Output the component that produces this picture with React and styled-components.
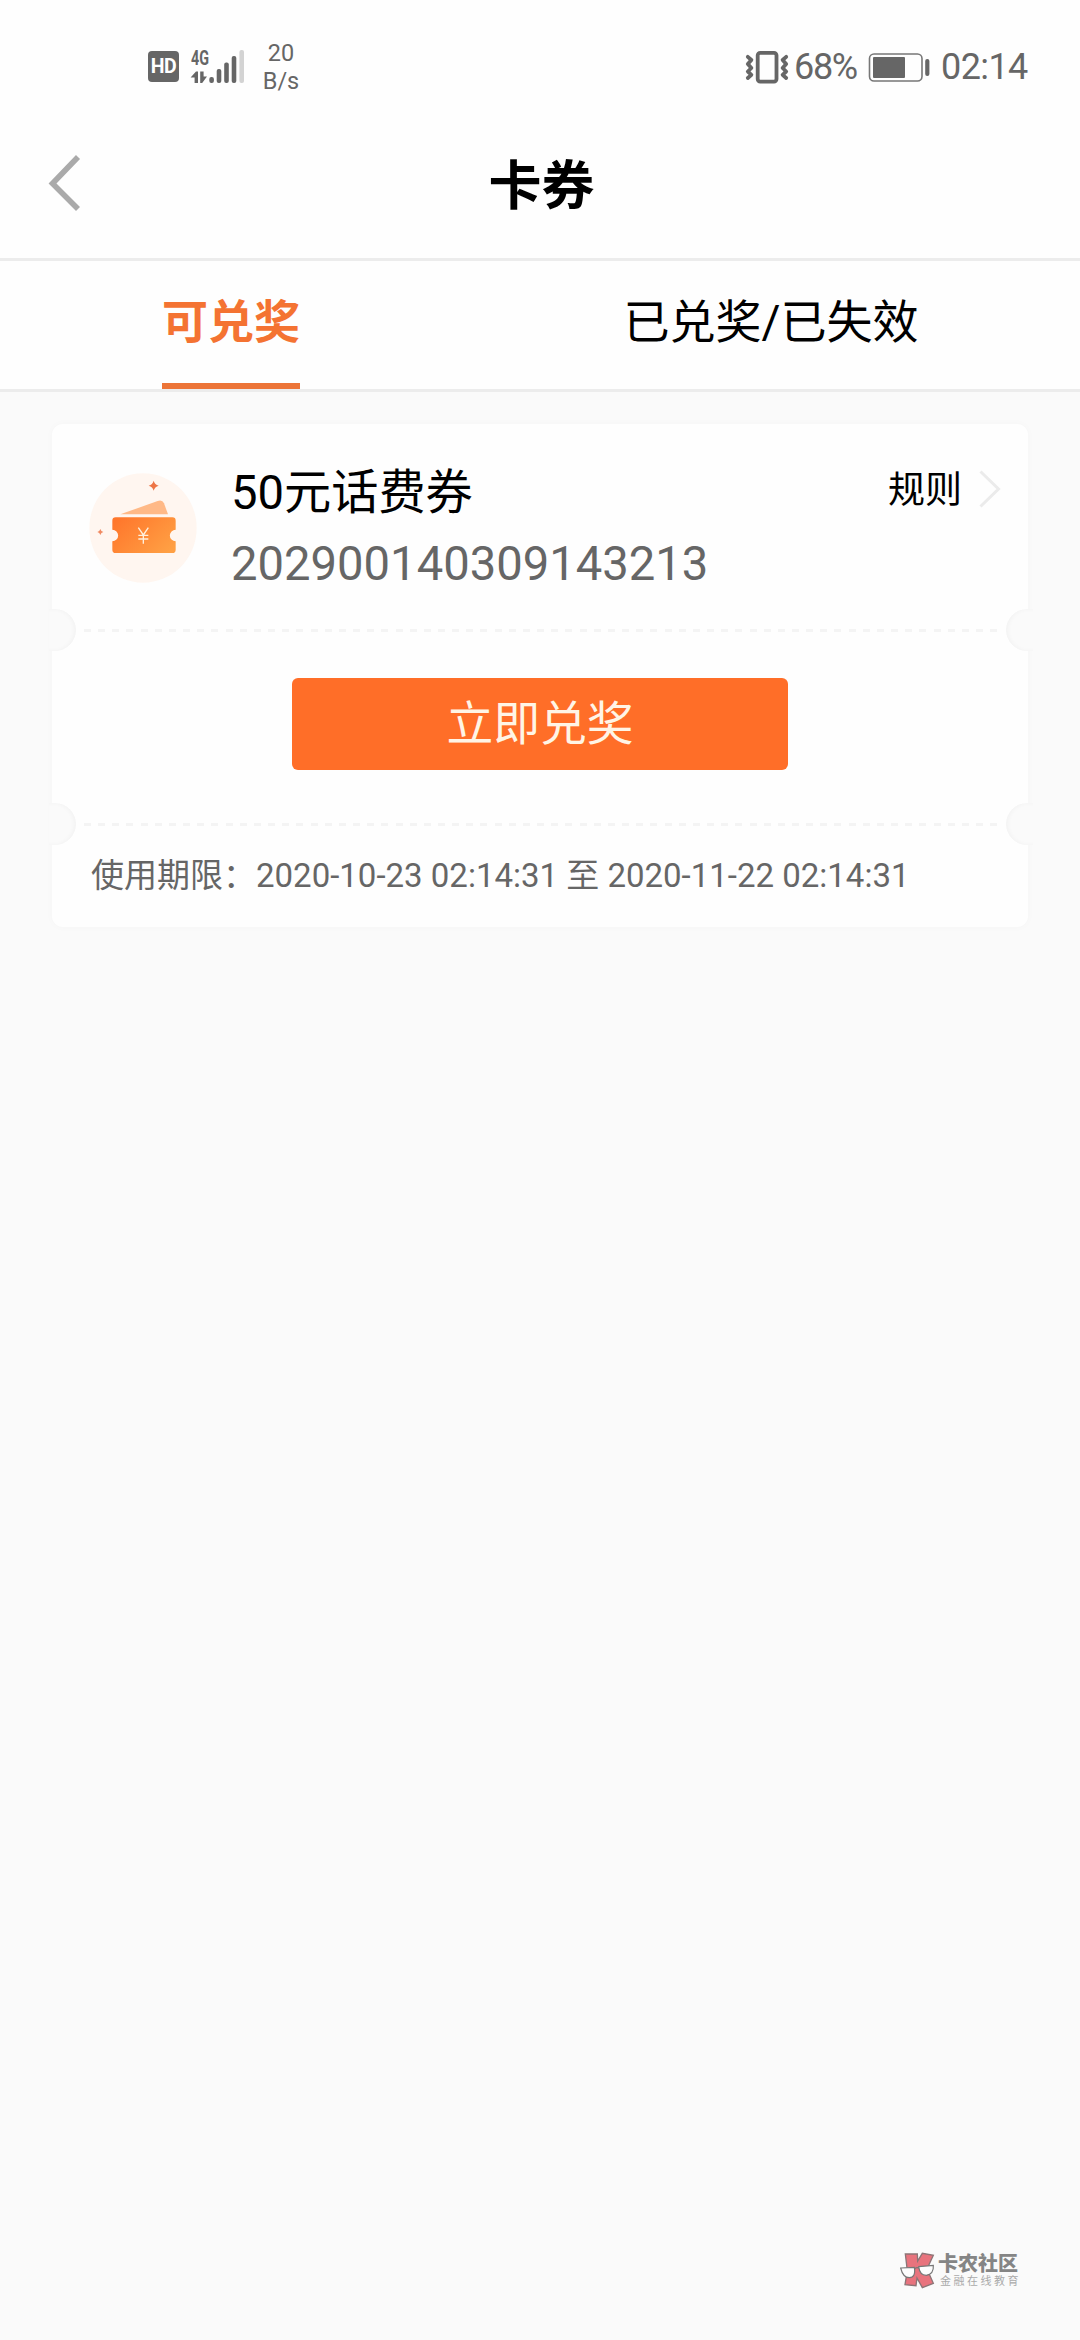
import React, { useState } from 'react';
import styled, { createGlobalStyle } from 'styled-components';

const tabs = ['可兑奖', '已兑奖/已失效'];

const coupon = {
  name: '50元话费券',
  code: '202900140309143213',
  start: '2020-10-23 02:14:31',
  end: '2020-11-22 02:14:31',
};

const SignalIcon = () => (
  <svg width="54" height="52" viewBox="190 40 54 52" fill="#666">
    <text x="191" y="64" fontSize="21" fontWeight="700" textLength="18" lengthAdjust="spacingAndGlyphs">4G</text>
    <path d="M190.6 76.5 L196 70.5 H198 V82 H194.6 V76.5 Z" />
    <path d="M200.2 70.5 H203.6 V75.5 H207 L202.2 82 H200.2 Z" />
    <rect x="209.3" y="76" width="4.6" height="6" rx="2" />
    <rect x="216.7" y="68" width="4.6" height="14" rx="2" />
    <rect x="224.2" y="61.5" width="4.6" height="20.5" rx="2" />
    <rect x="231.7" y="55" width="4.6" height="27" rx="2" />
    <rect x="239.4" y="49" width="4.6" height="33" rx="2" fill="#d3d3d3" />
  </svg>
);

const VibrateIcon = () => (
  <svg width="44" height="34" viewBox="744 49 44 34" fill="none" stroke="#666">
    <rect x="756.7" y="51.8" width="18.8" height="28.8" rx="2.5" strokeWidth="3.8" />
    <path d="M746.8 55.8 L750.4 59 L746.8 63 L750.4 67 L746.8 70.5 L750.4 73.8 L746.8 77" strokeWidth="3.8" strokeLinecap="round" strokeLinejoin="round" />
    <path d="M785.2 55.8 L781.6 59 L785.2 63 L781.6 67 L785.2 70.5 L781.6 73.8 L785.2 77" strokeWidth="3.8" strokeLinecap="round" strokeLinejoin="round" />
  </svg>
);

const BatteryIcon = () => (
  <svg width="62" height="30" viewBox="868 51 62 30">
    <rect x="869.5" y="53" width="52.5" height="27" rx="4.5" fill="none" stroke="#777" strokeWidth="1.6" />
    <rect x="873" y="56" width="32" height="21" rx="1" fill="#666" />
    <rect x="925.2" y="58" width="4.2" height="17" rx="2" fill="#666" />
  </svg>
);

const BackIcon = () => (
  <svg width="34" height="58" viewBox="0 0 34 58" fill="none">
    <path d="M31 3 L5.5 29.5 L31 55" stroke="#aaa" strokeWidth="5.6" />
  </svg>
);

const MoreIcon = () => (
  <svg width="22" height="38" viewBox="0 0 22 38" fill="none">
    <path d="M1.5 1.5 L19.5 19 L1.5 36.5" stroke="#ebebeb" strokeWidth="3" />
  </svg>
);

const TicketIcon = () => (
  <svg width="108" height="110" viewBox="25 40 324 330">
    <defs>
      <linearGradient id="ticket" x1="0" y1="0.2" x2="1" y2="0.8">
        <stop offset="0" stopColor="#ff772c" />
        <stop offset="1" stopColor="#ffa044" />
      </linearGradient>
    </defs>
    <ellipse cx="187" cy="205" rx="161" ry="164" fill="#fff6f0" />
    <path d="M119 164 L231 124 Q245 119 250 131 L262 164 Z" fill="#ffb987" />
    <path
      d="M105 173 H275 Q285 173 285 183 V210 A17.5 17.5 0 0 0 285 245 V270 Q285 280 275 280 H105 Q95 280 95 270 V245 A17.5 17.5 0 0 0 95 210 V183 Q95 173 105 173 Z"
      fill="url(#ticket)"
    />
    <path d="M219 63 Q222 75 234 78 Q222 81 219 93 Q216 81 204 78 Q216 75 219 63 Z" fill="#ed7546" />
    <path d="M59 208 Q61 215 68 217 Q61 219 59 226 Q57 219 50 217 Q57 215 59 208 Z" fill="#f08a62" />
    <path d="M173 204 L188 226 L203 204 M188 226 V252 M173 227 H203 M173 238 H203" stroke="#fff0dd" strokeWidth="4" fill="none" />
  </svg>
);

const CommunityLogo = () => (
  <svg width="36" height="38" viewBox="60 66 108 114">
    <path d="M76 72 H112 L113 93 L127 70 L160 76 L141 117 L160 160 L127 173 L111 144 L108 167 L75 164 L82 122 Z" fill="#e8737d" stroke="#8c7476" strokeWidth="4" />
    <path d="M62 114 L103 112 Q108 142 88 143 Q69 143 62 114 Z" fill="#fdfdfd" stroke="#777" strokeWidth="3.5" />
    <path d="M116 110 L160 106 Q162 132 139 136 Q119 136 116 110 Z" fill="#fdfdfd" stroke="#777" strokeWidth="3.5" />
    <path d="M103 117 Q110 110 117 115" fill="none" stroke="#777" strokeWidth="3.5" />
  </svg>
);

const App = () => {
  const [active, setActive] = useState(0);

  return (
    <Page>
      <GlobalStyle />
      <StatusBar>
        <StatusLeft>
          <HdBadge>HD</HdBadge>
          <SignalIcon />
          <Speed>
            <span>20</span>
            <span>B/s</span>
          </Speed>
        </StatusLeft>
        <StatusRight>
          <VibrateIcon />
          <Percent>68%</Percent>
          <BatteryIcon />
          <Clock>02:14</Clock>
        </StatusRight>
      </StatusBar>

      <Header>
        <BackButton aria-label="返回"><BackIcon /></BackButton>
        <Title>卡券</Title>
      </Header>

      <TabBar>
        {tabs.map((tab, index) => (
          <TabCell key={tab}>
            <Tab $active={index === active} onClick={() => setActive(index)}>{tab}</Tab>
          </TabCell>
        ))}
      </TabBar>

      <Card>
        <CardTop>
          <TicketIcon />
          <Info>
            <Name>{coupon.name}</Name>
            <Code>{coupon.code}</Code>
          </Info>
          <Rule>
            <RuleText>规则</RuleText>
            <MoreIcon />
          </Rule>
        </CardTop>
        <Divider />
        <CardAction>
          <Redeem>立即兑奖</Redeem>
        </CardAction>
        <Divider />
        <Period>使用期限：{coupon.start} 至 {coupon.end}</Period>
      </Card>

      <Watermark>
        <CommunityLogo />
        <div>
          <Brand>卡农社区</Brand>
          <Slogan>金融在线教育</Slogan>
        </div>
      </Watermark>
    </Page>
  );
};

// styled

const GlobalStyle = createGlobalStyle`
  * {
    box-sizing: border-box;
  }
  body {
    margin: 0;
    background: #fafafa;
  }
  button {
    padding: 0;
    border: 0;
    background: none;
    font-family: inherit;
    cursor: pointer;
  }
  svg {
    display: block;
    flex-shrink: 0;
  }
`;

const Page = styled.div`
  display: flex;
  flex-direction: column;
  width: 1080px;
  height: 2340px;
  overflow: hidden;
  background: #fafafa;
  color: #000;
  font-family: Roboto, "Noto Sans CJK SC", sans-serif;
`;

const StatusBar = styled.div`
  display: flex;
  justify-content: space-between;
  align-items: center;
  height: 111px;
  padding: 22px 49px 0 148px;
  background: #fefefe;
  color: #666;
`;

const StatusLeft = styled.div`
  display: flex;
  align-items: center;
`;

const StatusRight = styled.div`
  display: flex;
  align-items: center;
`;

const HdBadge = styled.span`
  width: 31px;
  height: 31px;
  margin-right: 11px;
  border-radius: 4px;
  background: #666;
  color: #fff;
  font-size: 19.5px;
  font-weight: 700;
  line-height: 31px;
  text-align: center;
  letter-spacing: -0.4px;
`;

const Speed = styled.div`
  display: flex;
  flex-direction: column;
  align-items: center;
  width: 38px;
  margin-left: 18px;
  font-size: 23.5px;
  line-height: 28px;
`;

const Percent = styled.span`
  width: 79px;
  padding-left: 5px;
  font-size: 36px;
  letter-spacing: -1.3px;
  line-height: 44px;
`;

const Clock = styled.span`
  width: 90px;
  margin-left: 11px;
  font-size: 36px;
  letter-spacing: -0.6px;
  line-height: 44px;
`;

const Header = styled.header`
  display: grid;
  grid-template-columns: 120px 1fr 120px;
  align-items: center;
  height: 150px;
  border-bottom: 3px solid #ececec;
  background: #fefefe;
`;

const BackButton = styled.button`
  padding: 0 0 4px 47px;
`;

const Title = styled.h1`
  margin: 0;
  padding: 5px 0 0 3px;
  font-size: 53px;
  font-weight: 700;
  line-height: 70px;
  text-align: center;
`;

const TabBar = styled.nav`
  display: flex;
  height: 131px;
  border-bottom: 3px solid #ececec;
  background: #fefefe;
`;

const TabCell = styled.div`
  display: flex;
  justify-content: center;
  flex: 1;
  padding-right: 78px;
`;

const Tab = styled.button`
  height: 128px;
  padding-top: 1px;
  border-bottom: 6px solid ${({ $active }) => ($active ? '#ec7437' : 'transparent')};
  color: ${({ $active }) => ($active ? '#f47332' : '#000')};
  font-size: 46px;
  font-weight: ${({ $active }) => ($active ? 700 : 400)};
  line-height: 121px;
  white-space: nowrap;
`;

const Card = styled.section`
  margin: 32px 52px 0;
  border-radius: 11px;
  background: #fefefe;
  box-shadow: 0 0 8px rgba(0, 0, 0, 0.025);
`;

const CardTop = styled.div`
  display: flex;
  height: 185px;
  padding: 49px 27px 0 37px;
`;

const Info = styled.div`
  flex: 1;
  margin: -15px 0 0 34px;
  font-size: 47.2px;
`;

const Name = styled.div`
  line-height: 70px;
`;

const Code = styled.div`
  color: #666;
  line-height: 72px;
`;

const Rule = styled.div`
  display: flex;
  align-items: center;
  gap: 17px;
  height: 38px;
  margin-top: -3px;
`;

const RuleText = styled.span`
  padding-bottom: 4px;
  font-size: 37px;
`;

// ticket perforation: half circles on both edges with a dashed line between
const Divider = styled.div`
  display: flex;
  justify-content: space-between;
  align-items: center;
  height: 42px;
  background: repeating-linear-gradient(90deg, #f4f4f4 0 7px, transparent 7px 14.16px) 32px center / 914px 3px no-repeat;
  &::before,
  &::after {
    content: '';
    width: 30px;
    height: 42px;
    background: #fafafa;
  }
  &::before {
    margin-left: -6px;
    border-radius: 0 21px 21px 0;
    box-shadow: inset -2px 0 4px rgba(0, 0, 0, 0.03);
    clip-path: inset(0 0 0 3px);
  }
  &::after {
    margin-right: -8px;
    border-radius: 21px 0 0 21px;
    box-shadow: inset 2px 0 4px rgba(0, 0, 0, 0.03);
    clip-path: inset(0 3px 0 0);
  }
`;

const CardAction = styled.div`
  display: flex;
  justify-content: center;
  height: 152px;
  padding-top: 27px;
`;

const Redeem = styled.button`
  width: 496px;
  height: 92px;
  border-radius: 6px;
  background: #ff6e28;
  color: #fff5e6;
  font-size: 46.8px;
  line-height: 89px;
`;

const Period = styled.div`
  height: 82px;
  padding-left: 39px;
  color: #666;
  font-size: 33px;
  line-height: 62px;
  white-space: nowrap;
`;

const Watermark = styled.footer`
  display: flex;
  gap: 2px;
  margin: auto 0 50px 900px;
  color: #858585;
`;

const Brand = styled.div`
  padding-top: 1px;
  font-size: 20px;
  font-weight: 900;
  line-height: 22px;
  white-space: nowrap;
`;

const Slogan = styled.div`
  padding-left: 2px;
  color: #aaa;
  font-size: 11px;
  line-height: 14px;
  letter-spacing: 2.5px;
  white-space: nowrap;
`;

export default App;
